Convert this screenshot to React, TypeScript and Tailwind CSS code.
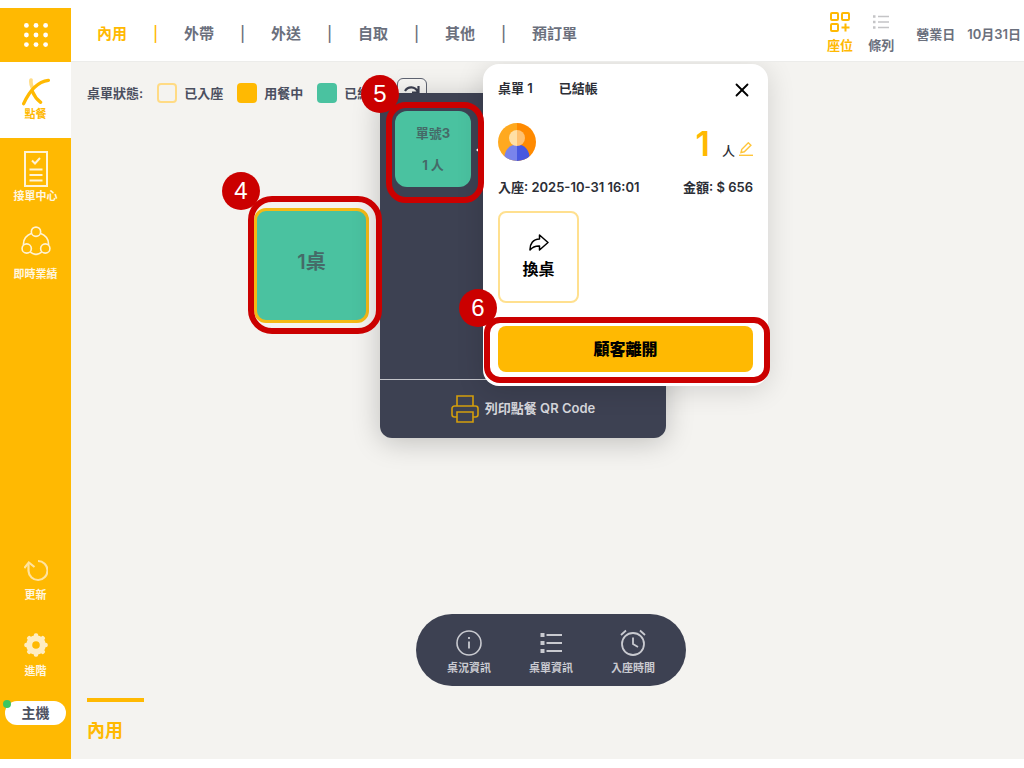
import type { ReactNode } from 'react';
import { clsx } from 'clsx';
import { X } from 'lucide-react';

const TABS = ['內用', '外帶', '外送', '自取', '其他', '預訂單'];

const LEGEND = [
    { label: '已入座', swatch: 'border-2 border-[#ffdb85]' },
    { label: '用餐中', swatch: 'bg-[#ffb902]' },
    { label: '已結帳', swatch: 'bg-[#4ac2a0]' },
];

function BrandIcon() {
    return (
        <svg className="size-7" viewBox="0 0 84 84" fill="none" strokeLinecap="round">
            <path d="M27 6c-1 8 0 15 4 23" stroke="#ffdc85" strokeWidth="11" />
            <path d="M31 40c5 12 12 23 25 33" stroke="#ffb902" strokeWidth="10" />
            <path d="M5 77C19 46 42 12 79 7" stroke="#ffb902" strokeWidth="10" />
        </svg>
    );
}

function OrderIcon() {
    return (
        <svg className="h-9 w-6" viewBox="0 0 24 36" fill="none" stroke="#fff3d6" strokeWidth="2">
            <rect x="1" y="1" width="22" height="34" />
            <path d="M8 9.5l3 3 5-5.5" />
            <path d="M5.500 18.500h13M5.500 24h13M5.500 29.500h13" />
        </svg>
    );
}

function TeamIcon() {
    return (
        <svg className="size-[30px]" viewBox="0 0 84 84" fill="none" stroke="#fff3d6" strokeWidth="4.500">
            <circle cx="42" cy="16" r="13" />
            <circle cx="16" cy="63" r="13" />
            <circle cx="68" cy="63" r="13" />
            <path d="M54 20c16 6 24 18 23 33M30 20C14 26 6 38 7 53M26 73c10 8 22 8 32 0" />
        </svg>
    );
}

function UpdateIcon() {
    return (
        <svg className="size-6" viewBox="0 0 24 24" fill="none" stroke="#ffe3a0" strokeWidth="2.200">
            <path d="M14 2a9.500 9.500 0 1 1-9.500 10V4" />
            <path d="M0.300 9L4.800 3.500l5.700 4.500" />
        </svg>
    );
}

function GearIcon() {
    return (
        <svg className="size-6" viewBox="0 0 24 24">
            <g fill="#ffedc2">
                <rect x="9.800" y="0.300" width="4.400" height="23.400" rx="1.800" />
                <rect x="9.800" y="0.300" width="4.400" height="23.400" rx="1.800" transform="rotate(45 12 12)" />
                <rect x="9.800" y="0.300" width="4.400" height="23.400" rx="1.800" transform="rotate(90 12 12)" />
                <rect x="9.800" y="0.300" width="4.400" height="23.400" rx="1.800" transform="rotate(135 12 12)" />
                <circle cx="12" cy="12" r="9.800" />
            </g>
            <circle cx="12" cy="12" r="3.800" fill="#ffb902" />
        </svg>
    );
}

function Avatar() {
    return (
        <svg className="size-[38px]" viewBox="0 0 38 38">
            <defs>
                <clipPath id="avatar-disc">
                    <circle cx="19" cy="19" r="19" />
                </clipPath>
            </defs>
            <g clipPath="url(#avatar-disc)">
                <path d="M0 0h19v38H0z" fill="#ffa91f" />
                <path d="M19 0h19v38H19z" fill="#ff8a00" />
                <path d="M19 21.500C11 21.500 6 27 6 38h13z" fill="#7984eb" />
                <path d="M19 21.500C27 21.500 32 27 32 38H19z" fill="#4758e0" />
                <path d="M19 7a8 8 0 0 0 0 16z" fill="#ffe0a6" />
                <path d="M19 7a8 8 0 0 1 0 16z" fill="#ffc170" />
            </g>
        </svg>
    );
}

interface SideButtonProps {
    label: string;
    icon: ReactNode;
    className?: string;
}

function SideButton({ label, icon, className }: SideButtonProps) {
    return (
        <button
            type="button"
            className={clsx('flex w-full flex-col items-center text-[11px] leading-4 font-bold', className)}
        >
            {icon}
            {label}
        </button>
    );
}

function Sidebar() {
    return (
        <aside className="flex w-[71px] shrink-0 flex-col items-center bg-[#ffb902] pb-[34px] text-[#fff6e0]">
            <button type="button" aria-label="選單" className="flex h-[54px] w-full items-center justify-center">
                <svg className="size-6" viewBox="0 0 24 24" fill="#fff">
                    {[2.4, 12, 21.6].map((y) =>
                        [2.4, 12, 21.6].map((x) => <circle key={`${x}-${y}`} cx={x} cy={y} r="2.400" />)
                    )}
                </svg>
            </button>
            <SideButton label="點餐" icon={<BrandIcon />} className="h-[76px] justify-center bg-white text-[#ffb902]" />
            <SideButton label="接單中心" icon={<OrderIcon />} className="mt-[13px] gap-px" />
            <SideButton label="即時業績" icon={<TeamIcon />} className="mt-[22px] gap-2.5" />

            <SideButton label="更新" icon={<UpdateIcon />} className="mt-auto gap-1" />
            <SideButton label="進階" icon={<GearIcon />} className="mt-[30px] gap-1.5" />
            <button
                type="button"
                className="relative mt-[22px] h-6 w-[61px] rounded-full bg-white text-sm leading-6 font-semibold text-[#4b4f5f]"
            >
                主機
                <span className="absolute -top-px -left-0.5 size-2 rounded-full bg-[#3ec660]" />
            </button>
        </aside>
    );
}

function Header() {
    return (
        <header className="flex h-[54px] items-center justify-between border-b border-[#ececea] bg-white pr-[3px] pb-0.5 pl-[26px]">
            <nav className="flex items-center gap-[26px] text-[15px] leading-6 text-[#6b707d]">
                {TABS.map((tab, i) => (
                    <div key={tab} className={clsx('flex items-center gap-[26px]', i === 0 && 'text-[#ffb902]')}>
                        <button type="button" className="font-semibold">{tab}</button>
                        {i < TABS.length - 1 && <span className="flex w-[5px] justify-center font-medium">|</span>}
                    </div>
                ))}
            </nav>
            <div className="flex items-center text-[13px] leading-4 font-semibold text-[#6b707d]">
                <button type="button" className="mb-1 flex flex-col items-center gap-1 text-[#ffb902]">
                    <svg className="size-[22px]" viewBox="0 0 22 22" fill="none" stroke="currentColor" strokeWidth="2">
                        <rect x="2" y="2" width="7" height="7" rx="1" />
                        <rect x="13" y="2" width="7" height="7" rx="1" />
                        <rect x="2" y="13" width="7" height="7" rx="1" />
                        <path d="M16.500 12.500v8M12.500 16.500h8" />
                    </svg>
                    座位
                </button>
                <button type="button" className="mb-1 ml-[15px] flex flex-col items-center gap-1">
                    <svg className="size-[22px]" viewBox="0 0 22 22" stroke="#c4c4c6" strokeWidth="1.500">
                        <path d="M8 5.500h11M8 11h11M8 16.500h11" />
                        <path d="M3 5.500h2.500M3 11h2.500M3 16.500h2.500" strokeWidth="2.500" />
                    </svg>
                    條列
                </button>
                <span className="ml-[22px]">營業日</span>
                <span className="ml-3">10月31日</span>
            </div>
        </header>
    );
}

function StatusLegend() {
    return (
        <div className="flex h-[62px] items-center gap-3.5 pl-4 text-[13px] leading-5 font-semibold text-[#4b4f5f]">
            <span>桌單狀態:</span>
            {LEGEND.map(({ label, swatch }) => (
                <span key={label} className="flex items-center gap-[7px]">
                    <span className={clsx('size-5 rounded', swatch)} />
                    {label}
                </span>
            ))}
            <button
                type="button"
                aria-label="重新整理"
                className="flex size-[30px] items-center justify-center rounded-md border border-[#5f6472] bg-[#f8f7f5]"
            >
                <svg className="size-5" viewBox="0 0 20 20" fill="none" stroke="#3d4152" strokeWidth="2.200">
                    <path d="M3 8c3-5 10-5 13 1M16.500 3v6.500H10" />
                    <path d="M17 12c-3 5-10 5-13-1" />
                </svg>
            </button>
        </div>
    );
}

// Numbered red frame laid over the control that a step refers to
function StepMark({ step, frame, badge }: { step: number; frame: string; badge: string }) {
    return (
        <>
            <span className={clsx('pointer-events-none absolute border-6 border-[#cb0000]', frame)} />
            <span
                className={clsx(
                    'pointer-events-none absolute flex size-[38px] items-center justify-center rounded-full bg-[#cb0000] font-["Liberation_Sans",sans-serif] text-2xl text-white',
                    badge
                )}
            >
                {step}
            </span>
        </>
    );
}

function OrderPanel() {
    return (
        <section className="absolute top-[31px] left-[309px] flex h-[345px] w-[286px] flex-col rounded-b-xl bg-[#3d4152] shadow-[0_4px_28px_rgba(0,0,0,0.22)]">
            <div className="flex-1 px-[15px] pt-[18px]">
                <button
                    type="button"
                    className="flex size-[76px] flex-col items-center justify-center gap-3 rounded-xl bg-[#4ac2a0] text-[13px] leading-5 font-bold text-[#456a68]"
                >
                    <span>單號3</span>
                    <span>1 人</span>
                </button>
            </div>
            <button
                type="button"
                className="flex h-[59px] items-center justify-center gap-1.5 border-t border-[#c3c4ca] text-[13px] font-semibold text-[#d6d7dc]"
            >
                <svg className="size-7" viewBox="0 0 28 28" fill="none" stroke="#d49e0c" strokeWidth="1.600">
                    <path d="M6 11V1h16v10" />
                    <path d="M6 22H3.500A2.500 2.500 0 0 1 1 19.500v-6A2.500 2.500 0 0 1 3.500 11h21a2.500 2.500 0 0 1 2.500 2.500v6a2.500 2.500 0 0 1-2.500 2.500H22" />
                    <path d="M6 17h16v10H6z" />
                </svg>
                列印點餐 QR Code
            </button>
        </section>
    );
}

function OrderCard() {
    return (
        <section className="absolute top-0.5 left-[412px] w-[285px] rounded-2xl bg-white px-[15px] py-3.5 text-[13px] leading-5 font-semibold text-[#2c2e36] shadow-[0_4px_28px_rgba(0,0,0,0.14)]">
            <svg className="absolute top-[81px] -left-[7px] h-2.5 w-[5px]" viewBox="0 0 5 10" fill="#fff">
                <path d="M5 1v8L0 5z" />
            </svg>
            <div className="flex h-5 items-center gap-[26px]">
                <span>桌單 1</span>
                <span>已結帳</span>
                <button type="button" aria-label="關閉" className="ml-auto pt-1 text-black">
                    <X className="size-[22px]" strokeWidth={2} />
                </button>
            </div>
            <div className="mt-5 flex h-12 items-center justify-between">
                <Avatar />
                <div className="flex items-baseline pt-1">
                    <span className="text-[34px] leading-10 font-semibold text-[#ffb902]">1</span>
                    <span className="ml-3 font-medium">人</span>
                    <button type="button" aria-label="編輯人數" className="ml-1">
                        <svg className="size-3.5" viewBox="0 0 14 14" fill="none" stroke="#ffc53a" strokeWidth="1.400">
                            <path d="M0 13.300h14" />
                            <path d="M2 10.500l.800-3.200L9.300.800l2.600 2.500-6.600 6.500z" />
                        </svg>
                    </button>
                </div>
            </div>
            <div className="mt-[11px] flex justify-between">
                <span>入座: 2025-10-31 16:01</span>
                <span>金額: $ 656</span>
            </div>
            <button
                type="button"
                className="mt-3.5 flex h-[92px] w-[81px] flex-col items-center justify-center gap-1 rounded-lg border-2 border-[#ffe08f] text-base leading-6 font-bold text-black"
            >
                <svg className="size-5" viewBox="0 0 20 20" fill="none" stroke="currentColor" strokeWidth="1.500" strokeLinejoin="round">
                    <path d="M10.500 2l8.500 7.500-8.500 7.500v-4C6 12.800 3.500 14 1 17 .800 11 4 6.200 10.500 6z" />
                </svg>
                換桌
            </button>
            <button
                type="button"
                className="mt-[23px] h-[46px] w-full rounded-lg bg-[#ffb902] text-base font-black text-black"
            >
                顧客離開
            </button>
        </section>
    );
}

function InfoDock() {
    return (
        <div className="absolute bottom-[73px] left-[345px] flex h-[72px] items-center gap-[38px] rounded-full bg-[#3d4152] px-[31px] pt-[5px] text-[11px] leading-4 font-semibold text-[#c9cad0]">
            <button type="button" className="flex flex-col items-center gap-[3px]">
                <svg className="size-7" viewBox="0 0 28 28" fill="none" stroke="currentColor" strokeWidth="1.600">
                    <circle cx="14" cy="14" r="12" />
                    <path d="M14 12.500v7M14 8v2" strokeWidth="1.800" />
                </svg>
                桌況資訊
            </button>
            <button type="button" className="flex flex-col items-center gap-[3px]">
                <svg className="size-7" viewBox="0 0 28 28" stroke="currentColor" strokeWidth="2.200">
                    <path d="M9.500 6H25M9.500 14H25M9.500 22H25" />
                    <path d="M3.500 6h4M3.500 14h4M3.500 22h4" strokeWidth="4" />
                </svg>
                桌單資訊
            </button>
            <button type="button" className="flex flex-col items-center gap-[3px]">
                <svg className="size-7" viewBox="0 0 28 28" fill="none" stroke="currentColor" strokeWidth="1.800">
                    <circle cx="14" cy="15" r="11" />
                    <path d="M14 8.500V15l5 3M2 6l5-4.500M26 6l-5-4.500" />
                </svg>
                入座時間
            </button>
        </div>
    );
}

export default function App() {
    return (
        <div className='flex min-h-screen bg-white pt-2 pb-[9px] font-["Inter","Noto_Sans_CJK_TC",sans-serif]'>
            <Sidebar />
            <div className="flex min-w-0 flex-1 flex-col">
                <Header />
                <main className="relative flex flex-1 flex-col overflow-hidden bg-[#f4f3f0]">
                    <StatusLegend />

                    <button
                        type="button"
                        className="absolute top-[146px] left-[183px] size-[115px] rounded-xl border-3 border-[#f5b915] bg-[#4ac2a0] pb-2 text-xl font-semibold text-[#456a68]"
                    >
                        1桌
                    </button>

                    <OrderPanel />
                    <OrderCard />
                    <StepMark step={4} frame="top-[134px] left-[177px] h-[138px] w-[134px] rounded-3xl" badge="top-[110px] left-[151px]" />
                    <StepMark step={5} frame="top-10 left-[315px] h-[101px] w-[98px] rounded-[20px]" badge="top-[13px] left-[290px]" />
                    <StepMark step={6} frame="top-[255px] left-[413px] h-[66px] w-[286px] rounded-2xl" badge="top-[227px] left-[388px]" />

                    <InfoDock />
                    <button
                        type="button"
                        className="mt-auto ml-4 w-[57px] border-t-4 border-[#ffb902] pt-[15px] pb-3.5 text-left text-lg leading-7 font-semibold text-[#ffb902]"
                    >
                        內用
                    </button>
                </main>
            </div>
        </div>
    );
}
